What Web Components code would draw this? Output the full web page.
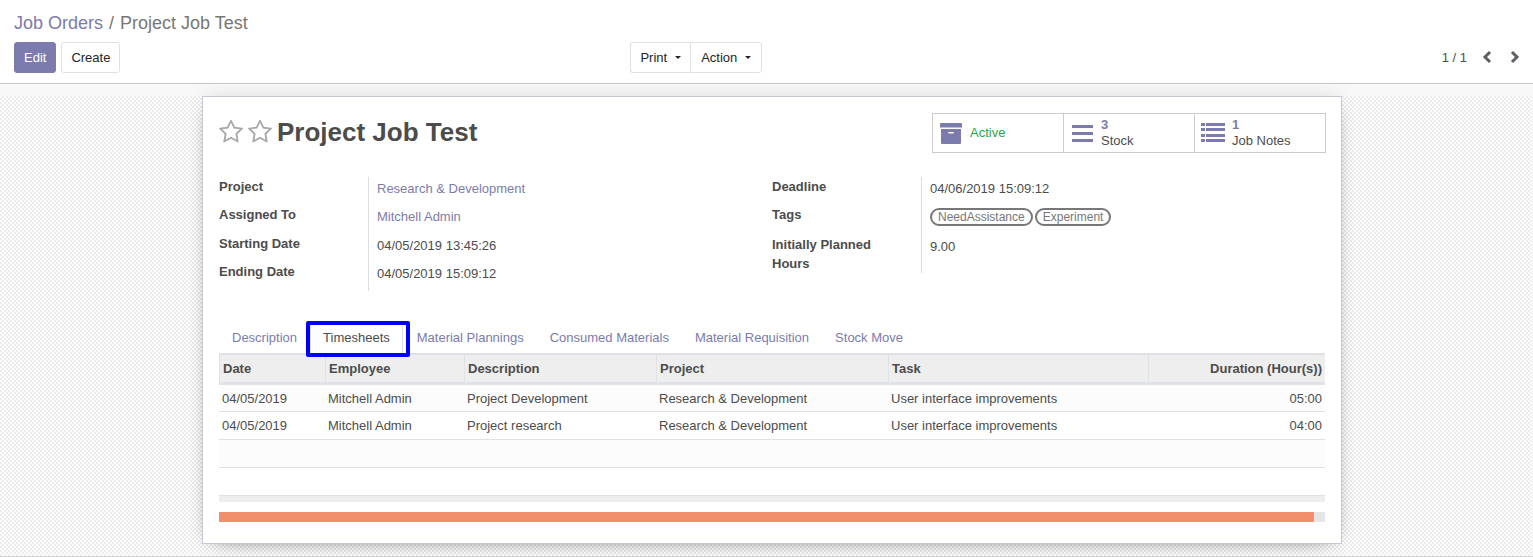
<!DOCTYPE html>
<html lang="en">
<head>
<meta charset="utf-8">
<title>Project Job Test</title>
<style>
body { margin: 0; font: 13px/19px "Liberation Sans", Arial, sans-serif; color: #4c4c4c; background: #fff; }
</style>
</head>
<body>
<job-page></job-page>
<script>
function define(name, html) {
  const t = document.createElement('template');
  t.innerHTML = '<style>*{box-sizing:border-box}a{color:#7c7bad;text-decoration:none}</style>' + html;
  customElements.define(name, class extends HTMLElement {
    constructor() {
      super();
      this.attachShadow({ mode: 'open' }).append(t.content.cloneNode(true));
    }
  });
}

define('ui-button', `
<style>
:host { display: block; }
button { display: flex; align-items: center; gap: 8px; height: 31px; padding: 0 9px; font: inherit; color: #212529;
  background: #fff; border: 1px solid #dee2e6; border-radius: 3px; white-space: nowrap; }
:host([primary]) button { background: #7c7bad; border-color: #7c7bad; color: #fff; }
:host([first]) button { border-radius: 3px 0 0 3px; border-right: 0; }
:host([last]) button { border-radius: 0 3px 3px 0; padding: 0 10px; }
i { display: none; border: 3px solid transparent; border-top-color: #212529; border-bottom: 0; }
:host([caret]) i { display: block; }
</style>
<button type="button"><slot></slot><i></i></button>`);

define('control-panel', `
<style>
:host { display: block; background: #fff; border-bottom: 1px solid #cacaca; padding: 10px 13px 10px 14px; }
nav { display: flex; gap: 6px; font-size: 18px; line-height: 27px; color: #777; margin-bottom: 5px; }
.bar { display: grid; grid-template-columns: 616fr 889fr; }
.group, .end, .pager { display: flex; align-items: center; }
.new { gap: 5px; }
.end { justify-content: space-between; }
.pager button { display: flex; padding: 0; border: 0; background: none; color: #5f5e66; }
.pager button:first-of-type { margin: 0 15px 0 14px; }
svg { display: block; fill: none; stroke: currentColor; stroke-width: 3; }
</style>
<nav aria-label="Breadcrumb"><a href="#">Job Orders</a><span>/</span><span>Project Job Test</span></nav>
<div class="bar">
  <div class="group new"><ui-button primary>Edit</ui-button><ui-button>Create</ui-button></div>
  <div class="end">
    <div class="group"><ui-button first caret>Print</ui-button><ui-button last caret>Action</ui-button></div>
    <div class="pager"><span>1 / 1</span>
      <button type="button" aria-label="Previous"><svg width="12" height="14" viewBox="0 0 12 14"><path d="M9 1 4 6l5 5"/></svg></button>
      <button type="button" aria-label="Next"><svg width="12" height="14" viewBox="0 0 12 14"><path d="m4 1 5 5-5 5"/></svg></button>
    </div>
  </div>
</div>`);

define('star-toggle', `
<style>
:host { display: block; }
button { display: block; padding: 0; border: 0; background: none; color: #a8a8a8; }
svg { display: block; }
</style>
<button type="button" aria-label="Priority"><svg width="24" height="24" viewBox="0 128 1664 1536" fill="currentColor"><path d="M1137 1004l306-297-422-62-189-382-189 382-422 62 306 297-73 421 378-199 377 199zm527-357q0 22-26 48l-363 354 86 500q1 7 1 20 0 50-41 50-19 0-40-12l-449-236-449 236q-22 12-40 12-21 0-31.500-14.500t-10.500-35.500q0-6 2-20l86-500-364-354q-25-27-25-48 0-37 56-46l502-73 225-455q19-41 49-41t49 41l225 455 502 73q56 9 56 46z"/></svg></button>`);

define('stat-button', `
<style>
:host { display: block; width: 131px; border-left: 1px solid #ccc; }
button { display: flex; align-items: center; gap: 7px; width: 100%; height: 38px; padding: 0 0 0 6px; border: 0; background: none;
  font: inherit; line-height: 16px; color: #4c4c4c; text-align: left; }
</style>
<button type="button"><slot name="icon"></slot><span><slot></slot></span></button>`);

define('stat-bar', `
<style>
:host { display: flex; border: 1px solid #ccc; border-left: 0; margin-right: -1px; }
b { display: block; color: #7c7bad; }
.ok { color: #28a745; }
svg { display: block; fill: #7c7bad; }
</style>
<stat-button><svg slot="icon" width="24" height="24" viewBox="0 0 24 24"><path d="M2 2h20q1 0 1 1v3.500H1V3q0-1 1-1zM2 8h20v14q0 1-1 1H3q-1 0-1-1zm8 3q-1 0-1 .8t1 .8h4q1 0 1-.8t-1-.8z"/></svg><span class="ok">Active</span></stat-button>
<stat-button><svg slot="icon" width="24" height="24" viewBox="0 0 24 24"><path d="M2 4h21v3H2zM2 11h21v3H2zM2 18h21v3H2z"/></svg><b>3</b>Stock</stat-button>
<stat-button><svg slot="icon" width="24" height="24" viewBox="0 0 24 24"><path d="M0 2h4v3H0zM5 2h19v3H5zM0 7h4v3H0zM5 7h19v3H5zM0 13h4v3H0zM5 13h19v3H5zM0 18h4v3H0zM5 18h19v3H5z"/></svg><b>1</b>Job Notes</stat-button>`);

define('field-group', `
<style>
:host { display: block; flex: 1; }
</style>
<slot></slot>`);

define('form-field', `
<style>
:host { display: grid; grid-template-columns: 149px 1fr; min-height: 28px; }
:host([tall]) { min-height: 29px; }
:host([tags]) { min-height: 30px; }
:host([tags]) .value { padding-top: 3px; }
.label { font-weight: bold; padding-right: 30px; }
.value { border-left: 1px solid #ddd; padding: 2px 0 0 8px; }
</style>
<div class="label"><slot name="label"></slot></div><div class="value"><slot></slot></div>`);

define('tag-pill', `
<style>
:host { display: inline-block; border: 2px solid #777; border-radius: 9px; padding: 0 6px; height: 18px; box-sizing: border-box; font-size: 12px; line-height: 14px; color: #777; margin-right: 2px; vertical-align: top; }
</style><slot></slot>`);

define('tab-list', `
<style>
:host { display: flex; }
a { display: block; padding: 7px 13px 6px; }
.on { position: relative; color: #4c4c4c; border: solid #dee2e6; border-width: 0 1px; padding: 7px 12px 6px; margin: 0 1px 0 0; }
.on::after { content: ""; position: absolute; inset: 0 -8px -4px -5px; border: 4px solid #00f; border-radius: 2px; }
</style>
<a href="#">Description</a><a href="#" class="on" aria-current="page">Timesheets</a><a href="#">Material Plannings</a><a href="#">Consumed Materials</a><a href="#">Material Requisition</a><a href="#">Stock Move</a>`);

define('timesheet-table', `
<style>
:host { display: block; }
table { width: 100%; table-layout: fixed; border-spacing: 0; border-collapse: separate; }
th { height: 32px; padding: 0 3px; text-align: left; background: #eee; border-left: 1px solid #dee2e6; border-top: 2px solid #dee2e6; border-bottom: 3px solid #dee2e6; }
td { height: 28px; padding: 0 3px; border-bottom: 1px solid #dee2e6; }
tbody tr:first-child td { height: 27px; }
tbody tr:nth-child(odd) { background: #fcfcfc; }
th:last-child, td:last-child { text-align: right; }
tfoot td { height: 6px; background: #eee; border: 0; }
</style>
<table>
<colgroup><col style="width:106px"><col style="width:139px"><col style="width:192px"><col style="width:232px"><col style="width:260px"><col></colgroup>
<thead><tr><th>Date</th><th>Employee</th><th>Description</th><th>Project</th><th>Task</th><th>Duration (Hour(s))</th></tr></thead>
<tbody>
<tr><td>04/05/2019</td><td>Mitchell Admin</td><td>Project Development</td><td>Research &amp; Development</td><td>User interface improvements</td><td>05:00</td></tr>
<tr><td>04/05/2019</td><td>Mitchell Admin</td><td>Project research</td><td>Research &amp; Development</td><td>User interface improvements</td><td>04:00</td></tr>
<tr><td colspan="6"></td></tr>
<tr><td colspan="6"></td></tr>
</tbody>
<tfoot><tr><td colspan="6"></td></tr></tfoot>
</table>`);

define('load-bar', `
<style>
:host { display: block; height: 10px; background: #e6e6e6; }
div { height: 100%; width: 99%; background: #f08f69; border-radius: 0 1px 1px 0; }
</style><div></div>`);

define('job-sheet', `
<style>
:host { display: block; box-sizing: border-box; max-width: 1140px; margin: 0 auto; padding: 16px 16px 21px; background: #fff; border: 1px solid #c8c8d3; box-shadow: 0 5px 20px -15px #000, 0 0 20px rgba(0,0,0,.08); }
header { display: flex; align-items: flex-start; justify-content: space-between; }
.title { display: flex; align-items: center; gap: 5px; padding-top: 2px; }
h1 { margin: 0; font-size: 26px; line-height: 34px; }
.fields { display: flex; margin: 24px 0 30px; }
load-bar { margin-top: 10px; }
</style>
<header>
  <div class="title"><star-toggle></star-toggle><star-toggle></star-toggle><h1>Project Job Test</h1></div>
  <stat-bar></stat-bar>
</header>
<div class="fields">
  <field-group>
    <form-field><span slot="label">Project</span><a href="#">Research &amp; Development</a></form-field>
    <form-field tall><span slot="label">Assigned To</span><a href="#">Mitchell Admin</a></form-field>
    <form-field><span slot="label">Starting Date</span>04/05/2019 13:45:26</form-field>
    <form-field tall><span slot="label">Ending Date</span>04/05/2019 15:09:12</form-field>
  </field-group>
  <field-group>
    <form-field><span slot="label">Deadline</span>04/06/2019 15:09:12</form-field>
    <form-field tags><span slot="label">Tags</span><tag-pill>NeedAssistance</tag-pill><tag-pill>Experiment</tag-pill></form-field>
    <form-field><span slot="label">Initially Planned Hours</span>9.00</form-field>
  </field-group>
</div>
<tab-list></tab-list>
<timesheet-table></timesheet-table>
<load-bar></load-bar>`);

define('job-page', `
<style>
:host { display: flex; flex-direction: column; min-height: 100vh; }
main { flex: 1; padding: 12px 0 12px 11px; border-bottom: 1px solid #d5d5d5;
  background: linear-gradient(#f8f8f8, #f8f8f8) 0 0 / 100% 12px no-repeat, repeating-conic-gradient(#ededed 0 25%, #fff 0 50%) 0 0 / 4px 4px; }
</style>
<control-panel></control-panel>
<main><job-sheet></job-sheet></main>`);
</script>
</body>
</html>
